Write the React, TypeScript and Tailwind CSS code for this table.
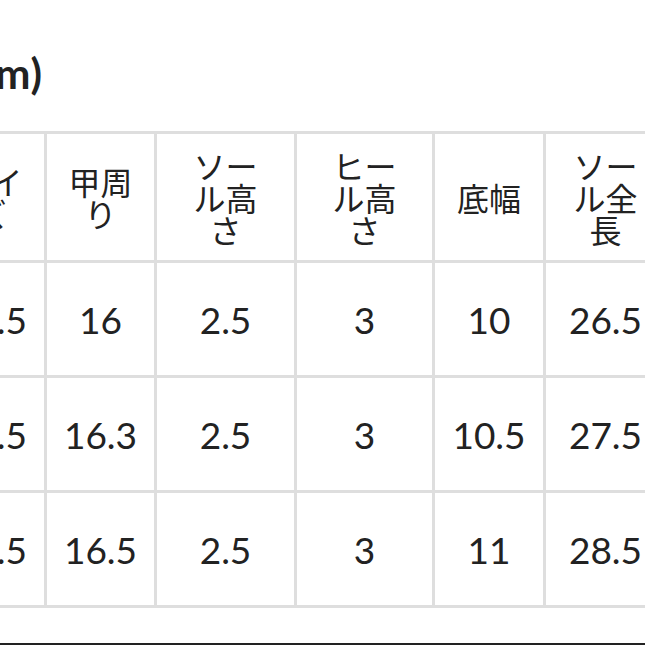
import React from "react";

const cols = [
  { label: "サイズ", w: "w-[110px]", px: "px-[16px]" },
  { label: "甲周り", w: "w-[110px]", px: "px-[16px]" },
  { label: "ソール高さ", w: "w-[140px]", px: "px-[22px]" },
  { label: "ヒール高さ", w: "w-[138px]", px: "px-[22px]" },
  { label: "底幅", w: "w-[111px]", px: "px-[16px]" },
  { label: "ソール全長", w: "w-[122px]", px: "px-[22px]" },
];

const rows = [
  ["22.5", "16", "2.5", "3", "10", "26.5"],
  ["23.5", "16.3", "2.5", "3", "10.5", "27.5"],
  ["24.5", "16.5", "2.5", "3", "11", "28.5"],
];

export default function App() {
  return (
    <div className="w-[645px] h-[645px] overflow-hidden bg-white flex flex-col text-[#222]">
      {/* title, left part runs off the page */}
      <div className="h-[131px] pt-[52px]">
        <div className="w-[42px] flex justify-end whitespace-nowrap font-bold text-[42px] leading-[42px] font-['Lato','Noto_Sans_CJK_JP',sans-serif]">
          サイズ表(cm)
        </div>
      </div>

      <table className="-ml-[66px] w-[731px] table-fixed border-collapse shrink-0">
        <colgroup>
          {cols.map((c) => (
            <col key={c.label} className={c.w} />
          ))}
        </colgroup>
        <thead>
          <tr className="h-[129px]">
            {cols.map((c) => (
              <th
                key={c.label}
                className={`border-[3px] border-[#dedede] ${c.px} font-normal text-[32px] leading-[32px] text-center align-middle font-['Noto_Sans_CJK_JP',sans-serif]`}
              >
                {c.label}
              </th>
            ))}
          </tr>
        </thead>
        <tbody>
          {rows.map((r, i) => (
            <tr key={i} className="h-[115px]">
              {r.map((v, j) => (
                <td
                  key={j}
                  className="border-[3px] border-[#dedede] text-center align-middle text-[37px] leading-none font-['Lato',sans-serif]"
                >
                  {v}
                </td>
              ))}
            </tr>
          ))}
        </tbody>
      </table>

      <div className="mt-auto h-[2px] bg-[#222]" />
    </div>
  );
}
